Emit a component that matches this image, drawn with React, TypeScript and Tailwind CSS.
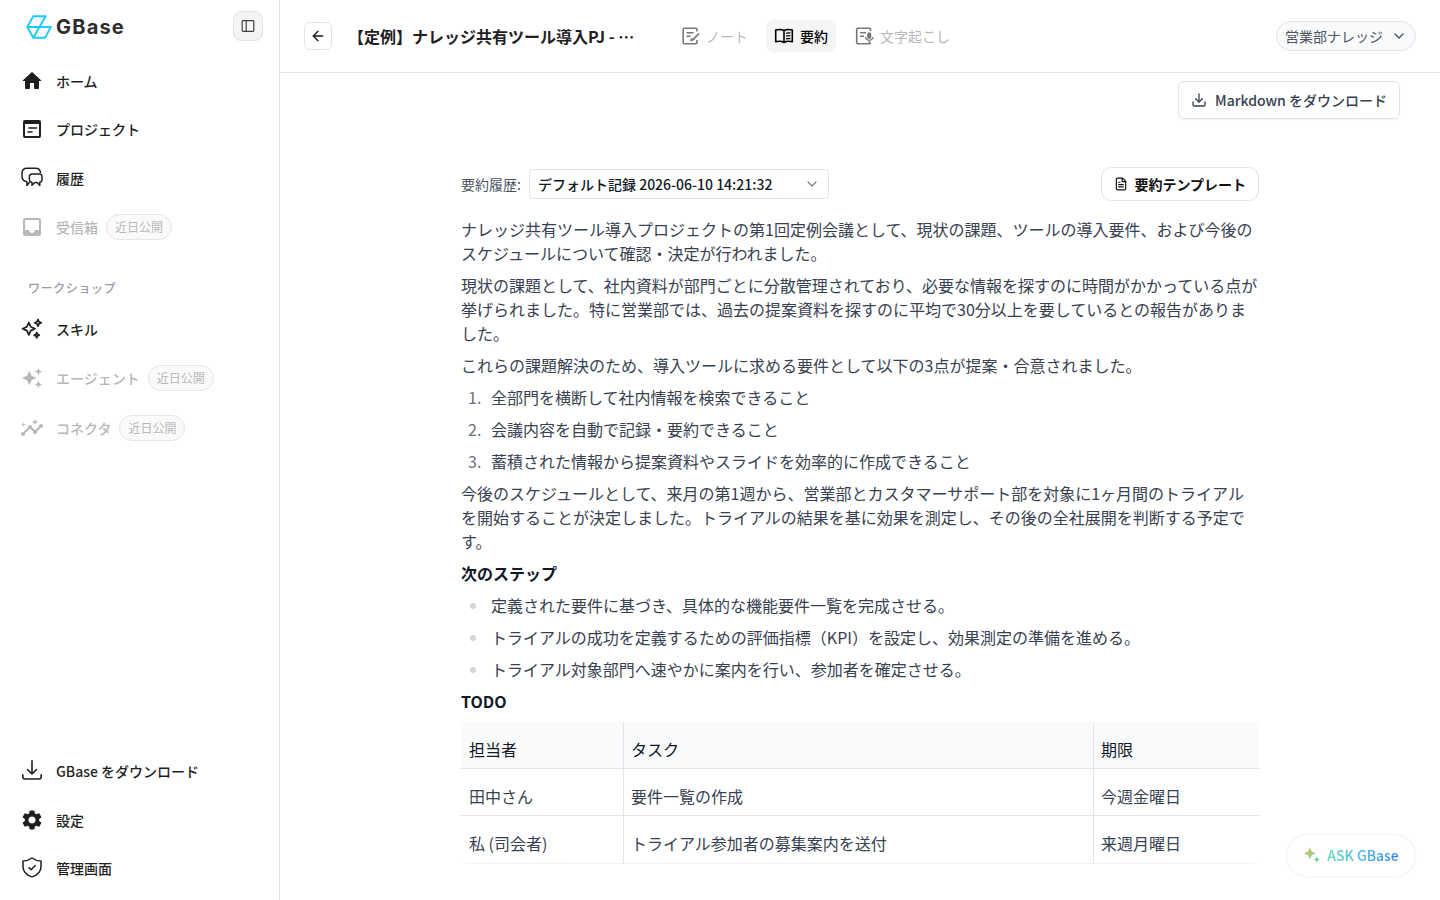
import React from 'react';
import { ArrowLeft, ChevronDown, Download, FileText } from 'lucide-react';
import { MdAutoAwesome, MdInbox, MdInsights, MdSettings } from 'react-icons/md';

type NavItem = {
  label: string;
  icon: React.ReactNode;
  comingSoon?: boolean;
};

const HomeIcon = () => (
  <svg width="24" height="24" viewBox="0 0 24 24" fill="currentColor">
    <path d="M10 19v-5h4v5c0 .55.45 1 1 1h3c.55 0 1-.45 1-1v-7h1.700c.46 0 .68-.57.33-.87L12.670 3.600c-.38-.34-.96-.34-1.340 0l-8.360 7.530c-.34.3-.13.87.33.87H5v7c0 .55.45 1 1 1h3c.55 0 1-.45 1-1z" />
  </svg>
);

const ProjectIcon = () => (
  <svg width="24" height="24" viewBox="0 0 24 24" fill="none" stroke="currentColor" strokeWidth="2">
    <rect x="4" y="4" width="16" height="16" rx="1" />
    <path d="M4 5.500h16" strokeWidth="3" />
    <path d="M9 11h7.500M8 15h4" strokeLinecap="round" strokeWidth="1.600" />
  </svg>
);

const HistoryIcon = () => (
  <svg width="24" height="24" viewBox="0 0 24 24" fill="none" stroke="currentColor" strokeWidth="1.500" strokeLinejoin="round">
    <path d="M9.500 16.200l-2.600 3.300v-3.700C3.800 15.300 2 13.500 2 10.500V7.300c0-3.200 1.800-5 5-5h8.500c3 0 4.800 1.500 5 4.700" />
    <path d="M12 8h7.500c1.700 0 2.500 1.100 2.500 2.800v2.700c0 1.700-.7 2.600-2.200 2.700v3.300L17 16.400h-2.300L12 19.200v-3c-1.700-.1-2.600-1-2.600-2.700v-2.700C9.400 9.100 10.300 8 12 8z" />
  </svg>
);

const SkillIcon = () => (
  <svg width="24" height="24" viewBox="0 0 24 24" fill="none" stroke="currentColor" strokeWidth="1.700" strokeLinejoin="round">
    <path d="M8.800 5.500l1.900 4.300 4.300 1.900-4.300 1.900-1.900 4.300-1.900-4.300-4.300-1.900 4.300-1.900z" />
    <path d="M18 2.500l1 2.300 2.300 1-2.300 1-1 2.300-1-2.300-2.300-1 2.300-1z" />
    <path d="M16.700 15.600l.8 1.800 1.800.8-1.800.8-.8 1.800-.8-1.800-1.800-.8 1.800-.8z" />
  </svg>
);

const DownloadTrayIcon = () => (
  <svg width="24" height="24" viewBox="0 0 24 24" fill="none" stroke="currentColor" strokeWidth="1.600" strokeLinecap="round" strokeLinejoin="round">
    <path d="M12 1.800v13M7.500 10.500l4.500 4.500 4.500-4.500M2.800 15.800v2c0 1.300.8 2.200 2.200 2.200h14c1.400 0 2.200-.9 2.200-2.200v-2" />
  </svg>
);

const ShieldIcon = () => (
  <svg width="24" height="24" viewBox="0 0 24 24" fill="none" stroke="currentColor" strokeWidth="1.500" strokeLinecap="round" strokeLinejoin="round">
    <path d="M12 2c2.500 1.900 5.400 2.900 9 3.100v5.300c0 5-3.500 8.500-9 10.500-5.500-2-9-5.500-9-10.500V5.100c3.600-.2 6.500-1.200 9-3.100z" />
    <path d="M9 11.700l2.100 2.100 4.100-4.300" />
  </svg>
);

const NoteIcon = () => (
  <svg width="20" height="20" viewBox="0 0 20 20" fill="none" stroke="currentColor" strokeWidth="1.600">
    <path d="M16 5.500V3.500c0-.8-.4-1.200-1.200-1.200H3.400c-.8 0-1.200.4-1.200 1.200v13c0 .8.400 1.200 1.200 1.200h11.400c.8 0 1.200-.4 1.200-1.200V14" />
    <path d="M5.500 6.700h7M5.500 10.300h4" />
    <path d="M18 7.500l-6 6.200-1.700.5.4-1.800" strokeWidth="1.700" />
  </svg>
);

const BookIcon = () => (
  <svg width="20" height="20" viewBox="0 0 20 20" fill="none" stroke="currentColor" strokeWidth="1.600" strokeLinejoin="round">
    <path d="M10 4.500C8 3.400 5 3.100 1.700 4v11.700c3.300-.8 6.300-.5 8.300.8 2-1.300 5-1.600 8.300-.8V4C15 3.100 12 3.400 10 4.500zM10 4.500v12" />
    <path d="M12 7.300c1.300-.4 2.800-.5 4.400-.3M12 10.100c1.300-.4 2.800-.5 4.400-.3M12 12.900c1.300-.4 2.800-.5 4.400-.3" strokeWidth="1.300" />
  </svg>
);

const TranscriptIcon = () => (
  <svg width="20" height="20" viewBox="0 0 20 20" fill="none" stroke="currentColor" strokeWidth="1.600">
    <path d="M16.500 5V3.500c0-.8-.4-1.200-1.200-1.200H3.900c-.8 0-1.200.4-1.200 1.200v13c0 .8.400 1.200 1.200 1.200h11.400c.8 0 1.200-.4 1.200-1.200" />
    <path d="M6 6.700h6M6 10.300h4" />
    <path d="M11.500 11c.3 2.200 1.600 3.300 3.700 3.300s3.400-1.100 3.700-3.300M15.200 14.300V17" strokeWidth="1.300" />
    <rect x="13.100" y="6.300" width="4.200" height="6.700" rx="2.100" fill="currentColor" stroke="none" />
  </svg>
);

const mainNav: NavItem[] = [
  { label: "ホーム", icon: <HomeIcon /> },
  { label: "プロジェクト", icon: <ProjectIcon /> },
  { label: "履歴", icon: <HistoryIcon /> },
  { label: "受信箱", icon: <MdInbox size={24} />, comingSoon: true }
];

const workshopNav: NavItem[] = [
  { label: "スキル", icon: <SkillIcon /> },
  { label: "エージェント", icon: <MdAutoAwesome size={22} />, comingSoon: true },
  { label: "コネクタ", icon: <MdInsights size={24} />, comingSoon: true }
];

const footerNav: NavItem[] = [
  { label: "GBase をダウンロード", icon: <DownloadTrayIcon /> },
  { label: "設定", icon: <MdSettings size={24} /> },
  { label: "管理画面", icon: <ShieldIcon /> }
];

const requirements = [
  "全部門を横断して社内情報を検索できること",
  "会議内容を自動で記録・要約できること",
  "蓄積された情報から提案資料やスライドを効率的に作成できること"
];

const nextSteps = [
  "定義された要件に基づき、具体的な機能要件一覧を完成させる。",
  "トライアルの成功を定義するための評価指標（KPI）を設定し、効果測定の準備を進める。",
  "トライアル対象部門へ速やかに案内を行い、参加者を確定させる。"
];

const todos = [
  { owner: "田中さん", task: "要件一覧の作成", due: "今週金曜日" },
  { owner: "私 (司会者)", task: "トライアル参加者の募集案内を送付", due: "来週月曜日" }
];

const NavList = ({ items, rowClass = "h-[48.5px]" }: { items: NavItem[]; rowClass?: string }) => (
  <ul>
    {items.map(item => (
      <li
        key={item.label}
        className={`flex items-center pl-5 text-sm font-medium ${rowClass} ${item.comingSoon ? 'text-[#b8b8ba]' : 'text-[#1f1f1f]'}`}
      >
        <span className="mr-3 flex size-6 items-center justify-center">{item.icon}</span>
        <span>{item.label}</span>
        {item.comingSoon && (
          <span className="ml-2 flex h-[26px] items-center rounded-full border border-[#e6e6e8] bg-[#fafafa] px-2 text-xs font-normal">
            近日公開
          </span>
        )}
      </li>
    ))}
  </ul>
);

const Sidebar = () => (
  <aside className="flex w-[280px] shrink-0 flex-col border-r border-[#e2e3e5]">
    <div className="flex h-[56.5px] items-start justify-between pt-[11px] pr-4 pl-[26px]">
      <div className="flex h-8 items-center gap-1">
        <svg width="26" height="24" viewBox="0 0 26 24" fill="none" stroke="#1bcbf5" strokeWidth="1.900" strokeLinejoin="round">
          <path d="M1.300 12L7.300 1.300h12.400L7.300 22.700z" />
          <path d="M1.300 12h23.600l-5.900 10.700H7.300" />
        </svg>
        <span className="font-['Inter',sans-serif] text-xl leading-8 font-bold tracking-[1.2px] text-[#2d2d2f]">GBase</span>
      </div>
      <button className="flex size-[30px] items-center justify-center rounded-lg border border-[#e2e2e5] bg-[#f4f4f5] text-[#3f3f46]">
        <svg width="14" height="14" viewBox="0 0 14 14" fill="none" stroke="currentColor" strokeWidth="1.200">
          <rect x="1.200" y="1.700" width="11.600" height="10.600" rx=".8" />
          <path d="M5.200 1.700v10.600" />
        </svg>
      </button>
    </div>
    <NavList items={mainNav} rowClass="h-[48.6px]" />
    <h2 className="mt-[27.5px] mb-1.5 pl-7 text-xs leading-5 font-medium tracking-[0.6px] text-[#9a9ba3]">ワークショップ</h2>
    <NavList items={workshopNav} rowClass="h-[49.4px]" />
    <div className="mt-auto mb-[7.5px]">
      <NavList items={footerNav} />
    </div>
  </aside>
);

const Header = () => (
  <header className="flex h-[73px] shrink-0 items-center border-b border-[#e2e3e5] px-6">
    <button className="flex size-7 items-center justify-center rounded-md border border-[#e4e4e7] text-[#18181b]">
      <ArrowLeft size={16} />
    </button>
    <h1 className="ml-4 w-[294px] text-base font-bold whitespace-nowrap text-[#1f2023]">【定例】ナレッジ共有ツール導入PJ - ⋯</h1>
    <nav className="ml-[31px] flex items-center gap-2.5 text-sm text-[#b8b8ba]">
      <div className="flex h-8 items-center gap-[5px] rounded-lg px-2">
        <span className="text-[#77777a]"><NoteIcon /></span>
        <span>ノート</span>
      </div>
      <div className="flex h-8 items-center gap-1.5 rounded-lg bg-[#f5f5f5] px-2 font-medium text-black">
        <BookIcon />
        <span>要約</span>
      </div>
      <div className="flex h-8 items-center gap-1.5 rounded-lg px-2">
        <span className="text-[#77777a]"><TranscriptIcon /></span>
        <span>文字起こし</span>
      </div>
    </nav>
    <button className="ml-auto flex h-[30px] items-center gap-2 rounded-full border border-[#dfe4ea] bg-[#f8fafc] px-2 text-sm text-[#4b5563]">
      <span>営業部ナレッジ</span>
      <ChevronDown size={16} />
    </button>
  </header>
);

const cellClass = "border-r border-b border-[#e2e4e8] pt-[15px] pr-2 pb-[7px] pl-[7px] first:pl-2 last:border-r-0";

const TodoTable = () => (
  <table className="mt-[9px] w-full table-fixed border-separate border-spacing-0 overflow-hidden rounded-lg text-left">
    <colgroup>
      <col className="w-[163px]" />
      <col className="w-[470px]" />
      <col />
    </colgroup>
    <thead>
      <tr className="bg-[#f9fafb] text-[#111827]">
        {["担当者", "タスク", "期限"].map(title => (
          <th key={title} className={`${cellClass} font-normal`}>{title}</th>
        ))}
      </tr>
    </thead>
    <tbody>
      {todos.map(todo => (
        <tr key={todo.owner} className="group">
          {[todo.owner, todo.task, todo.due].map(value => (
            <td key={value} className={`${cellClass} group-last:border-b-[#f0f1f3] group-last:pb-2 group-last:first:rounded-bl-lg group-last:last:rounded-br-lg`}>{value}</td>
          ))}
        </tr>
      ))}
    </tbody>
  </table>
);

const Summary = () => (
  <article className="mt-4 text-base leading-6 text-[#374151]">
    <div className="space-y-2">
      <p>ナレッジ共有ツール導入プロジェクトの第1回定例会議として、現状の課題、ツールの導入要件、および今後のスケジュールについて確認・決定が行われました。</p>
      <p>現状の課題として、社内資料が部門ごとに分散管理されており、必要な情報を探すのに時間がかかっている点が挙げられました。特に営業部では、過去の提案資料を探すのに平均で30分以上を要しているとの報告がありました。</p>
      <p>これらの課題解決のため、導入ツールに求める要件として以下の3点が提案・合意されました。</p>
      <ol className="space-y-2">
        {requirements.map((text, index) => (
          <li key={text} className="flex">
            <span className="w-[30px] shrink-0 pl-[7px] text-[#6b7280]">{index + 1}.</span>
            <span>{text}</span>
          </li>
        ))}
      </ol>
      <p>今後のスケジュールとして、来月の第1週から、営業部とカスタマーサポート部を対象に1ヶ月間のトライアルを開始することが決定しました。トライアルの結果を基に効果を測定し、その後の全社展開を判断する予定です。</p>
      <h3 className="font-bold text-[#111827]">次のステップ</h3>
      <ul className="space-y-2">
        {nextSteps.map(text => (
          <li key={text} className="flex items-center">
            <span className="mt-0.5 mr-[15.5px] ml-[8.5px] size-1.5 shrink-0 rounded-full bg-[#d1d5db]" />
            <span>{text}</span>
          </li>
        ))}
      </ul>
      <h3 className="font-bold text-[#111827]">TODO</h3>
    </div>
    <TodoTable />
  </article>
);

const App = () => {
  return (
    <div lang="ja" className="relative flex h-screen overflow-hidden bg-white font-['Noto_Sans_CJK_JP',sans-serif]">
      <Sidebar />
      <main className="flex min-w-0 flex-1 flex-col">
        <Header />
        <div className="flex justify-end pt-2 pr-10">
          <button className="flex h-[38px] items-center gap-2 rounded-md border border-[#e2e3e7] px-3 text-sm font-medium text-[#374151] shadow-xs">
            <Download size={16} />
            <span>Markdown をダウンロード</span>
          </button>
        </div>
        <div className="mx-auto mt-12 w-[798px]">
          <div className="flex h-[34px] items-center">
            <span className="w-[68px] text-sm whitespace-nowrap text-[#4b5563]">要約履歴:</span>
            <div className="flex h-[30px] w-[300px] items-center justify-between rounded border border-[#e2e3e7] px-2 text-sm font-medium text-[#111827]">
              <span>デフォルト記録 2026-06-10 14:21:32</span>
              <ChevronDown size={16} strokeWidth={1.8} className="text-[#7b818c]" />
            </div>
            <button className="ml-auto flex h-[34px] items-center gap-1.5 rounded-[10px] border border-[#e2e3e7] px-3 text-sm font-bold text-[#111]">
              <FileText size={14} />
              <span>要約テンプレート</span>
            </button>
          </div>
          <Summary />
        </div>
      </main>
      <button className="absolute right-[25px] bottom-6 flex h-[41px] w-32 items-center justify-center gap-1.5 rounded-full bg-white pb-px text-sm font-medium shadow-[0_0_3px_rgba(0,0,0,0.12)]">
        <svg width="18" height="18" viewBox="0 0 17 17">
          <defs>
            <linearGradient id="spark" x1="0" x2="1" y1="0" y2="1">
              <stop offset="0" stopColor="#f3b35c" />
              <stop offset="0.55" stopColor="#93cf85" />
              <stop offset="1" stopColor="#4fd0a0" />
            </linearGradient>
          </defs>
          <path fill="url(#spark)" d="M6.500 1l1.500 3.800c.1.300.3.500.6.600l3.600 1.500-3.600 1.500c-.3.100-.5.300-.6.600L6.500 12.800 5 9c-.1-.3-.3-.5-.6-.6L.8 6.900l3.600-1.500c.3-.1.500-.3.600-.6zM13 9.800l.9 2.100 2.100.9-2.100.9-.9 2.100-.9-2.100-2.100-.9 2.100-.9z" />
        </svg>
        <span className="bg-linear-to-r from-[#5fd9ae] via-[#4db8e8] to-[#2f7fe6] bg-clip-text text-transparent">ASK GBase</span>
      </button>
    </div>
  );
};

export default App;
